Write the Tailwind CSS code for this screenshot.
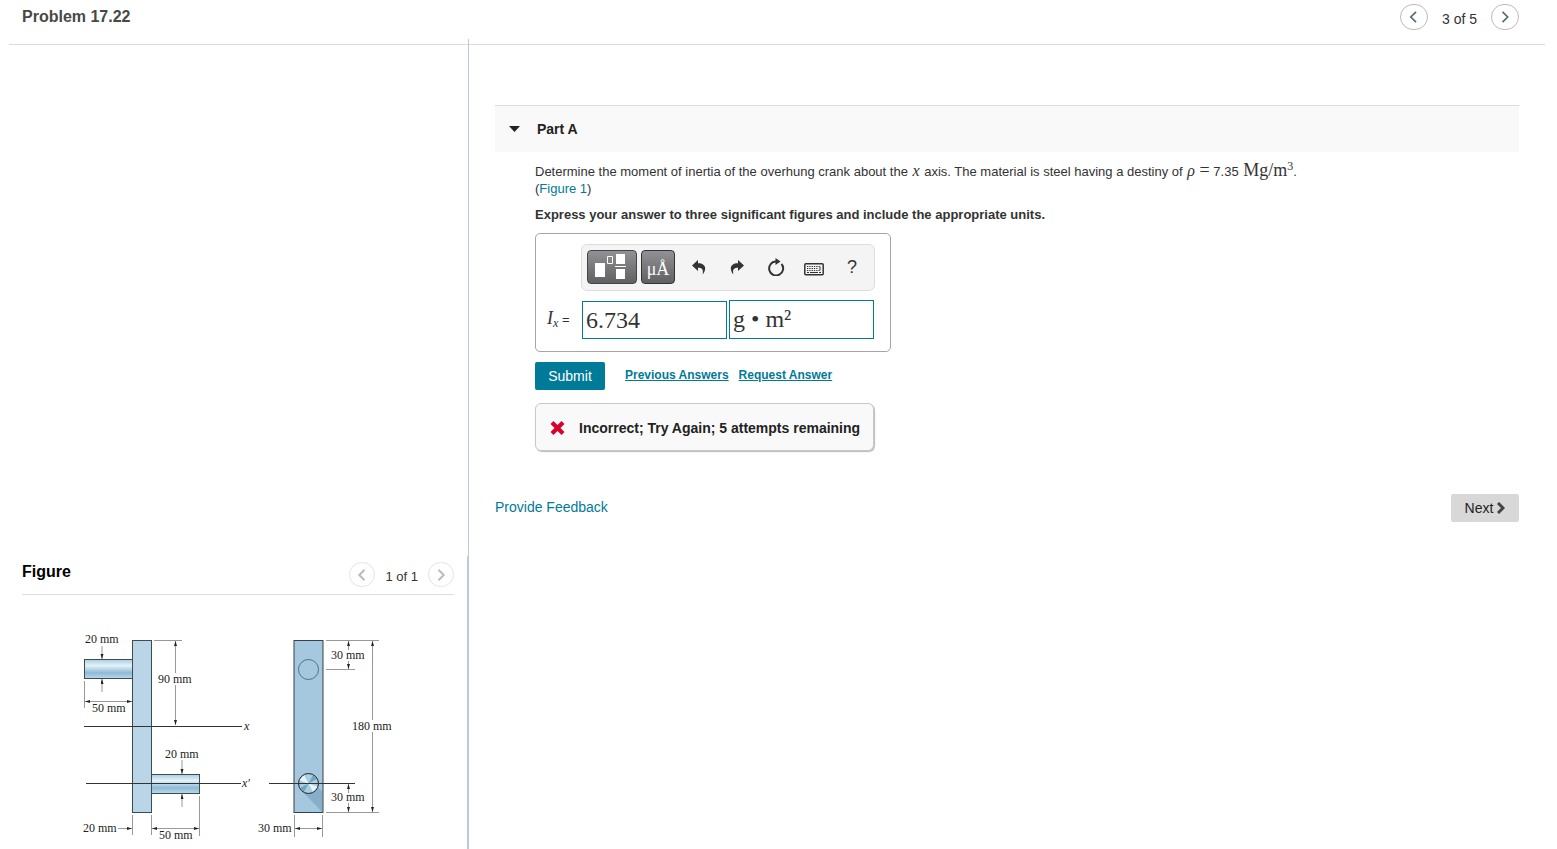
<!DOCTYPE html>
<html lang="en">
<head>
  <meta charset="UTF-8" />
  <meta name="viewport" content="width=device-width, initial-scale=1.0"/>
  <title>Problem 17.22</title>
  <script src="https://cdn.jsdelivr.net/npm/@tailwindcss/browser@4"></script>
</head>
<body class="bg-white text-[#333] min-h-screen flex flex-col font-['Liberation_Sans',Arial,sans-serif] text-[13px] leading-[17px]">

  <!-- Top bar -->
  <header class="ml-[9px] mr-3 h-[45px] shrink-0 border-b border-[#ddd] flex items-start justify-between pl-[13px] pr-[26px]">
    <h1 class="mt-2 text-base leading-[18px] font-bold text-[#484848]">Problem 17.22</h1>
    <nav class="mt-1 flex items-center" aria-label="Problems">
      <button class="w-7 h-[26px] rounded-full border border-[#bbb] flex items-center justify-center text-[#566b78]" aria-label="Previous problem">
        <svg width="10" height="12" viewBox="0 0 10 12" fill="none" stroke="currentColor" stroke-width="1.7"><path d="M7 .8 1.800 6 7 11.200"/></svg>
      </button>
      <span class="mx-[14px] pt-1 text-sm leading-[18px]">3 of 5</span>
      <button class="w-7 h-[26px] rounded-full border border-[#bbb] flex items-center justify-center text-[#566b78]" aria-label="Next problem">
        <svg width="10" height="12" viewBox="0 0 10 12" fill="none" stroke="currentColor" stroke-width="1.7"><path d="M2.500 .8 7.700 6l-5.200 5.200"/></svg>
      </button>
    </nav>
  </header>

  <main class="-mt-[6px] flex grow">
    <!-- Left column -->
    <aside class="w-[469px] shrink-0 flex flex-col">
      <div class="grow border-r border-[#b9cbdd]"></div>
      <section class="h-[293px] border-r-2 border-[#b9cbdd] pl-[22px] pr-[13px]">
        <div class="h-[39px] border-b border-[#ddd] flex justify-between items-start">
          <h2 class="mt-[7px] text-base leading-[18px] font-bold text-black">Figure</h2>
          <nav class="mt-[6px] flex items-center" aria-label="Figures">
            <button class="w-[26px] h-[25px] rounded-full border border-[#e4e4e4] flex items-center justify-center text-[#bbb]" aria-label="Previous figure">
              <svg width="10" height="12" viewBox="0 0 10 12" fill="none" stroke="currentColor" stroke-width="2"><path d="M7.500 .8 2.300 6l5.200 5.200"/></svg>
            </button>
            <span class="mx-[10px] pt-1 leading-[18px]">1 of 1</span>
            <button class="w-[26px] h-[25px] rounded-full border border-[#e4e4e4] flex items-center justify-center text-[#bbb]" aria-label="Next figure">
              <svg width="10" height="12" viewBox="0 0 10 12" fill="none" stroke="currentColor" stroke-width="2"><path d="M2.500 .8 7.700 6l-5.200 5.200"/></svg>
            </button>
          </nav>
        </div>

        <svg class="mt-[30px] ml-12 block font-['Liberation_Serif',serif]" width="340" height="224" viewBox="0 0 340 224" font-size="12" fill="#222" role="img" aria-label="Overhung crank, side and front view">
          <defs>
            <linearGradient id="pin" x1="0" y1="0" x2="0" y2="1">
              <stop offset="0" stop-color="#a9cde2"/>
              <stop offset=".32" stop-color="#e4f2f9"/>
              <stop offset=".7" stop-color="#8ebad5"/>
              <stop offset="1" stop-color="#bcdaea"/>
            </linearGradient>
            <marker id="arrow" markerUnits="userSpaceOnUse" markerWidth="6" markerHeight="4" refX="5" refY="1.5" orient="auto-start-reverse">
              <path d="M0 0v3l5-1.5z" fill="#222"/>
            </marker>
          </defs>

          <!-- side view -->
          <rect x="62.5" y="15.5" width="19" height="172" fill="#b9d5e7" stroke="#3b4c57"/>
          <rect x="14.5" y="34.5" width="48" height="19" fill="url(#pin)" stroke="#3b4c57"/>
          <rect x="81.5" y="149.5" width="48" height="19" fill="url(#pin)" stroke="#3b4c57"/>
          <path d="M14 101.5H172M16 158.5H171" stroke="#333"/>

          <!-- front view -->
          <rect x="224" y="15.5" width="29" height="172" fill="#a5c8de" stroke="#33434d"/>
          <path d="M232 166l20 21v-21l-7-6z" fill="#86afc9"/>
          <circle cx="238.5" cy="44.5" r="10" fill="none" stroke="#55707f"/>
          <circle cx="238.5" cy="158.5" r="10" fill="#a8cfe2"/>
          <path d="M238.5 158.5 229 155l5-5zM238.5 158.5 243 167l5-5z" fill="#e9f5fa"/>
          <path d="M238.5 158.5 243 150l4 4zM238.5 158.5 230 163l4 4z" fill="#6fa6c4"/>
          <circle cx="238.5" cy="158.5" r="10" fill="none" stroke="#222"/>
          <path d="M199 158.5H285" stroke="#333"/>

          <!-- extension lines -->
          <path d="M84 15.5h28M14.5 56v27M62.5 190v20M81.5 190v20M129.5 171v40M256 15.5h53M256 44.5h29M256 187.5h53M224.5 190v22M252.5 190v22" stroke="#999" fill="none"/>

          <!-- dimension lines -->
          <g stroke="#999" fill="none">
            <path d="M105.5 48V16" marker-end="url(#arrow)"/>
            <path d="M105.5 60v40" marker-end="url(#arrow)"/>
            <path d="M32 21v13" marker-end="url(#arrow)"/>
            <path d="M32 67V54" marker-end="url(#arrow)"/>
            <path d="M15 76.5h47" marker-start="url(#arrow)" marker-end="url(#arrow)"/>
            <path d="M112 135v14" marker-end="url(#arrow)"/>
            <path d="M112 182v-13" marker-end="url(#arrow)"/>
            <path d="M48 203.5h14" marker-end="url(#arrow)"/>
            <path d="M82 203.5h47" marker-start="url(#arrow)" marker-end="url(#arrow)"/>
            <path d="M278.5 25v-9" marker-end="url(#arrow)"/>
            <path d="M278.5 36v8" marker-end="url(#arrow)"/>
            <path d="M302.5 95V16" marker-end="url(#arrow)"/>
            <path d="M302.5 107v80" marker-end="url(#arrow)"/>
            <path d="M278.5 168v-9" marker-end="url(#arrow)"/>
            <path d="M278.5 178v9" marker-end="url(#arrow)"/>
            <path d="M225 203.5h27" marker-start="url(#arrow)" marker-end="url(#arrow)"/>
          </g>

          <text x="15" y="18">20 mm</text>
          <text x="88" y="58">90 mm</text>
          <text x="22" y="87">50 mm</text>
          <text x="174" y="105" font-style="italic">x</text>
          <text x="95" y="133">20 mm</text>
          <text x="172" y="162" font-style="italic">x′</text>
          <text x="13" y="207">20 mm</text>
          <text x="89" y="214">50 mm</text>
          <text x="261" y="34">30 mm</text>
          <text x="282" y="105">180 mm</text>
          <text x="261" y="176">30 mm</text>
          <text x="188" y="207">30 mm</text>
        </svg>
      </section>
    </aside>

    <!-- Right column -->
    <section class="grow pl-[26px] pr-[38px] pt-[66px]">
      <div class="h-[47px] border-t border-[#ddd] bg-[#f9f9f9] flex items-center pl-[14px] gap-[17px]">
        <svg width="11" height="6" viewBox="0 0 11 6" fill="#222"><path d="M0 0h11L5.5 6z"/></svg>
        <h2 class="text-sm font-bold text-[#222]">Part A</h2>
      </div>

      <div class="pl-10">
        <p class="mt-[9px]">Determine the moment of inertia of the overhung crank about the <i class="mx-px font-['Liberation_Serif',serif] text-base leading-none">x</i> axis. The material is steel having a destiny of <i class="mx-px font-['Liberation_Serif',serif] text-base leading-none">ρ</i> <span class="font-['Liberation_Serif',serif] text-lg leading-none">=</span> 7.35 <span class="ml-px font-['Liberation_Serif',serif] text-lg leading-none">Mg/m<sup class="-top-[6px] text-xs leading-none">3</sup></span>.<br>(<a href="#" class="text-[#007a99]">Figure 1</a>)</p>
        <p class="mt-[9px] font-bold">Express your answer to three significant figures and include the appropriate units.</p>

        <form id="answer" class="mt-[10px] w-[356px] h-[119px] rounded-[5px] border border-[#a5a5a5] pt-[10px] pr-[15px] pl-[11px]">
          <div class="ml-[34px] h-[47px] rounded-md border border-[#ddd] bg-[#f4f4f4] flex items-center pl-[5px] pb-px">
            <button type="button" class="w-[50px] h-[34px] rounded-[4px] border border-[#444] bg-linear-to-b from-[#929296] to-[#616163]" aria-label="Templates">
              <svg width="48" height="32" viewBox="1 1 48 32" fill="#fff"><path d="M8 13h10v14H8zM29 4h9v10h-9zM29 19h9v10h-9zM28 16h11v1H28z"/><path d="M20.5 6.5h5v7h-5z" fill="none" stroke="#fff"/></svg>
            </button>
            <button type="button" class="ml-1 w-[34px] h-[34px] rounded-[4px] border border-[#333] bg-linear-to-b from-[#929296] to-[#616163] pt-1 text-white text-lg leading-none font-['Liberation_Serif',serif]" aria-label="Symbols">μÅ</button>
            <button type="button" class="ml-[17px]" aria-label="Undo">
              <svg width="14" height="15" viewBox="0 0 14 15" fill="#333"><path d="M6 0 0 5.500 6 11V7.800c4 0 5.500 1.700 4.700 6.700C15.500 8 13 3.200 6 3.200z"/></svg>
            </button>
            <button type="button" class="ml-6" aria-label="Redo">
              <svg width="14" height="15" viewBox="0 0 14 15" fill="#333"><path d="M8 0l6 5.500L8 11V7.800c-4 0-5.500 1.700-4.700 6.700C-1.500 8 1 3.200 8 3.200z"/></svg>
            </button>
            <button type="button" class="ml-6" aria-label="Reset">
              <svg width="17" height="18" viewBox="0 0 17 18" fill="none" stroke="#333" stroke-width="2"><path d="M13.500 6A7 7 0 1 1 8 3.500"/><path d="M7.500 0v7L12.500 3.500z" fill="#333" stroke="none"/></svg>
            </button>
            <button type="button" class="ml-[19px] mt-1" aria-label="Keyboard shortcuts">
              <svg width="20" height="13" viewBox="0 0 20 13" fill="none" stroke="#333"><rect x=".8" y=".8" width="18.400" height="11" rx="1" stroke-width="1.5"/><path d="M3 3.500h14M3 5.500h11M3 7.500h14" stroke-dasharray="1.300 1"/><path d="M3 9.500h2m1 0h8m1 0h2M16 4v3"/></svg>
            </button>
            <button type="button" class="ml-[23px] text-lg leading-none" aria-label="Help">?</button>
          </div>
          <div class="mt-[9px] flex items-end">
            <label for="value" class="w-[35px] h-[30px] whitespace-nowrap"><i class="font-['Liberation_Serif',serif] text-lg leading-none">I<sub class="text-xs leading-none">x</sub></i> =</label>
            <input id="value" type="text" value="6.734" class="w-[145px] h-[38px] border border-[#007a99] px-[3px] text-2xl font-['Liberation_Serif',serif]">
            <input id="units" type="text" value="g • m²" aria-label="Units" class="ml-[2px] w-[145px] h-[39px] border border-[#007a99] px-[3px] text-2xl font-['Liberation_Serif',serif]">
          </div>
        </form>

        <div class="mt-[10px] flex items-start text-xs font-bold">
          <button type="submit" form="answer" class="w-[70px] h-7 rounded-xs bg-[#007a99] text-white text-sm font-normal">Submit</button>
          <a href="#" class="ml-5 mt-[5px] text-[#007a99] underline">Previous Answers</a>
          <a href="#" class="ml-[10px] mt-[5px] text-[#007a99] underline">Request Answer</a>
        </div>

        <div class="mt-[13px] w-[339px] h-12 rounded-md border border-[#c8c8c8] bg-[#f9f9f9] shadow-[1px_1px_1px_#bbb] flex items-center pl-[14px] pt-px text-sm font-bold text-[#222] whitespace-nowrap">
          <svg class="mr-[14px]" width="15" height="14" viewBox="0 0 15 14" fill="none" stroke="#d9002b" stroke-width="4.200"><path d="m2 1.500 11 11M13 1.500l-11 11"/></svg>
          Incorrect; Try Again; 5 attempts remaining
        </div>
      </div>

      <div class="mt-[43px] flex items-start justify-between text-sm">
        <a href="#" class="mt-[3px] text-[#007a99]">Provide Feedback</a>
        <button class="w-[68px] h-7 rounded-xs bg-[#d8d8d8] text-[#222] flex items-center justify-center gap-1">Next
          <svg width="8" height="12" viewBox="0 0 8 12" fill="none" stroke="#444" stroke-width="3"><path d="m1 1 5 5-5 5"/></svg>
        </button>
      </div>
    </section>
  </main>
</body>
</html>
